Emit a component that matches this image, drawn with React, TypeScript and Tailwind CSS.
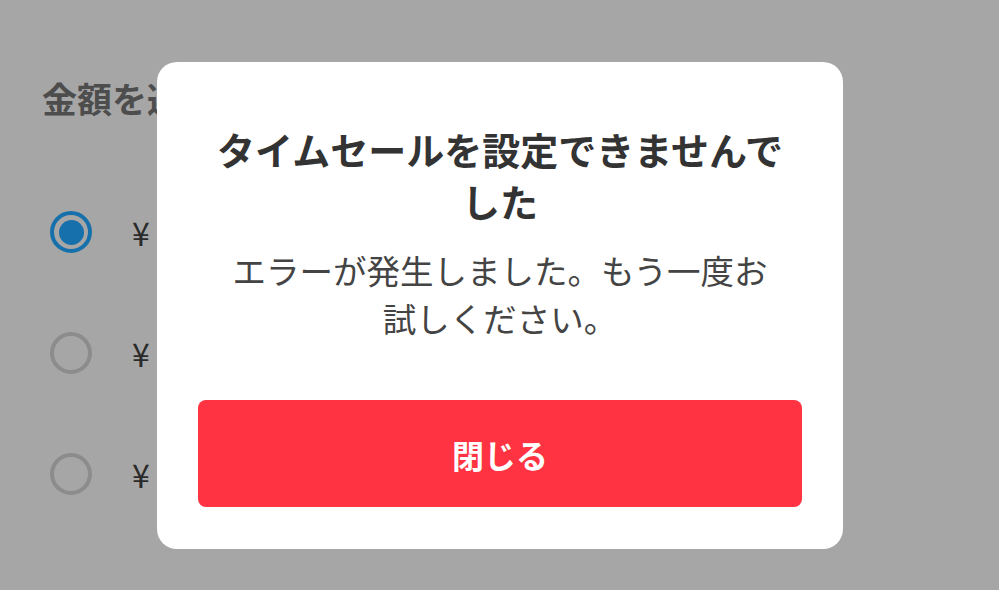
import React from "react";

const font = { fontFamily: '"Noto Sans CJK JP", "Noto Sans", sans-serif' };

function Radio({ selected }: { selected?: boolean }) {
  if (selected) {
    return (
      <div className="w-[42px] h-[42px] rounded-full border-[4px] border-[#1670ab] flex items-center justify-center">
        <div className="w-[25px] h-[25px] rounded-full bg-[#1670ab]" />
      </div>
    );
  }
  return <div className="w-[42px] h-[42px] rounded-full border-[4px] border-[#8c8c8c]" />;
}

export default function App() {
  return (
    <div className="relative w-[999px] h-[590px] overflow-hidden bg-[#a6a6a6]" style={font}>
      <div className="pl-[42px] pt-[74px]">
        <div className="text-[35px] leading-[48px] font-bold text-[#4d4d4d]">金額を選択してください</div>
        <div className="mt-[89px] flex flex-col gap-[79px] pl-[8px]">
          {[true, false, false].map((s, i) => (
            <div key={i} className="flex items-center gap-[40px] h-[42px]">
              <Radio selected={s} />
              <span className="text-[32px] leading-[42px] text-[#2b2b2b]">¥</span>
            </div>
          ))}
        </div>
      </div>

      <div className="absolute left-[157px] top-[62px] w-[686px] h-[487px] bg-white rounded-[20px] flex flex-col items-center pt-[61px] px-[41px]">
        <div className="w-full px-[4px] text-center text-[38px] leading-[52px] font-bold text-[#333333]">
          タイムセールを設定できませんでした
        </div>
        <div className="mt-[19px] w-[544px] text-center text-[33.5px] leading-[48px] text-[#444444]">
          エラーが発生しました。もう一度お試しください。
        </div>
        <button className="mt-[58px] w-[604px] h-[107px] rounded-[8px] bg-[#ff3341] text-white text-[32px] font-bold flex items-center justify-center">
          閉じる
        </button>
      </div>
    </div>
  );
}
